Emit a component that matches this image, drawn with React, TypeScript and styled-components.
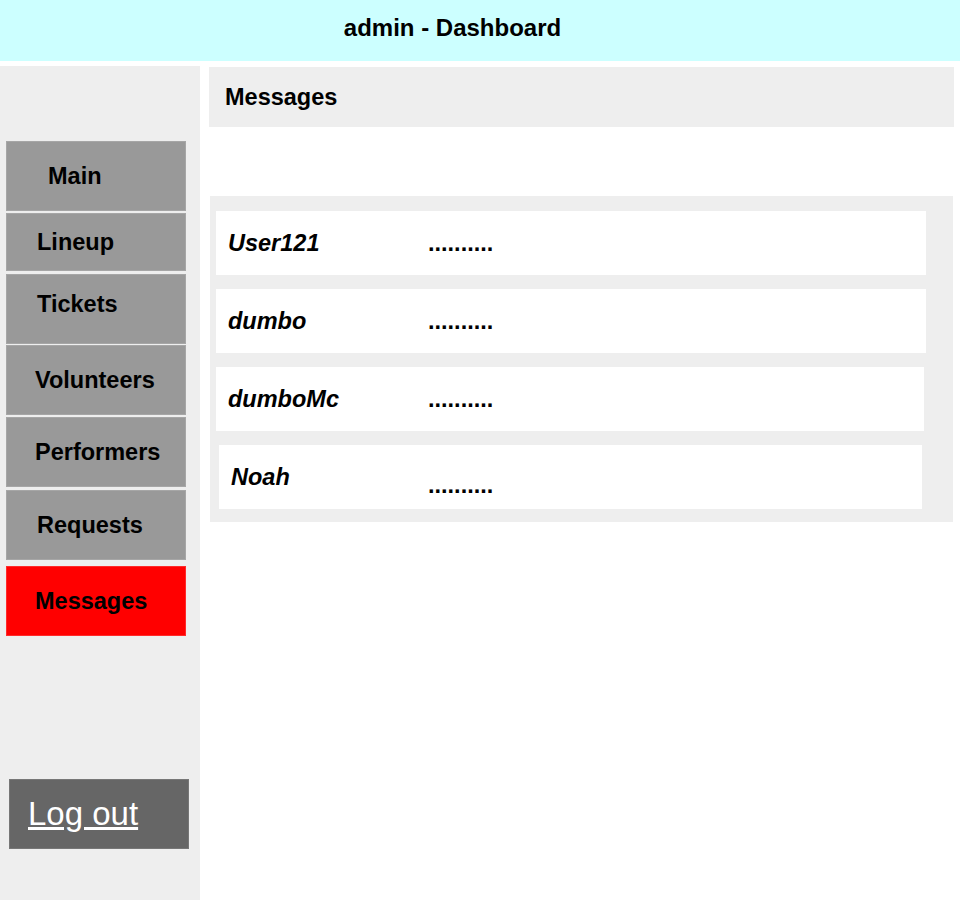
import React from 'react'
import styled, {createGlobalStyle} from 'styled-components'

interface NavEntry {
  label: string
  height: number
  gap: number
  indent: number
  lift?: number
  active?: boolean
}

interface MessageEntry {
  user: string
  left: number
  right: number
  drop?: number
}

const GlobalStyle = createGlobalStyle`
  html, body {
    margin: 0;
    padding: 0;
    background: #ffffff;
  }

  body {
    font-family: "Liberation Sans", Arial, sans-serif;
    color: #000000;
  }
`

const navEntries: NavEntry[] = [
  {label: 'Main', height: 70, gap: 0, indent: 42},
  {label: 'Lineup', height: 58, gap: 2, indent: 31},
  {label: 'Tickets', height: 70, gap: 3, indent: 31, lift: 10},
  {label: 'Volunteers', height: 70, gap: 1, indent: 29},
  {label: 'Performers', height: 70, gap: 2, indent: 29},
  {label: 'Requests', height: 70, gap: 3, indent: 31},
  {label: 'Messages', height: 70, gap: 6, indent: 29, active: true},
]

const messages: MessageEntry[] = [
  {user: 'User121', left: 0, right: 0},
  {user: 'dumbo', left: 0, right: 0},
  {user: 'dumboMc', left: 0, right: 2},
  {user: 'Noah', left: 3, right: 4, drop: 8},
]

const Page = styled.div`
  display: flex;
  flex-direction: column;
  min-height: 900px;
`

const TopBar = styled.header`
  height: 61px;
  box-sizing: border-box;
  background: #ccffff;
  display: flex;
  align-items: center;
  justify-content: center;
  padding: 0 55px 6px 0;
  font-size: 24px;
  font-weight: bold;
`

const Body = styled.div`
  flex: 1;
  display: flex;
  margin-top: 5px;
`

const Sidebar = styled.aside`
  width: 200px;
  flex-shrink: 0;
  background: #eeeeee;
  padding: 75px 0 0 6px;
  box-sizing: border-box;
  display: flex;
  flex-direction: column;
`

const NavList = styled.nav`
  display: flex;
  flex-direction: column;
  width: 180px;
`

const NavButton = styled.div<{
  $height: number
  $gap: number
  $indent: number
  $lift: number
  $active: boolean
}>`
  height: ${(p) => p.$height}px;
  margin-top: ${(p) => p.$gap}px;
  padding-left: ${(p) => p.$indent}px;
  padding-bottom: ${(p) => p.$lift}px;
  box-sizing: border-box;
  display: flex;
  align-items: center;
  background: ${(p) => (p.$active ? '#ff0000' : '#999999')};
  box-shadow: inset 0 0 0 1px ${(p) => (p.$active ? '#ff2a2a' : '#a6a6a6')};
  font-size: 23.5px;
  font-weight: bold;
  cursor: pointer;
`

const LogoutButton = styled.a`
  margin: 143px 0 0 3px;
  width: 180px;
  height: 70px;
  box-sizing: border-box;
  padding-left: 19px;
  display: flex;
  align-items: center;
  background: #666666;
  box-shadow: inset 0 0 0 1px #777777;
  color: #ffffff;
  font-size: 33px;
  text-decoration: underline;
  text-underline-offset: 2px;
  cursor: pointer;
`

const Content = styled.main`
  flex: 1;
  display: flex;
  flex-direction: column;
  padding: 1px 6px 0 9px;
`

const SectionTitle = styled.div`
  height: 60px;
  background: #eeeeee;
  display: flex;
  align-items: center;
  padding-left: 16px;
  font-size: 23.5px;
  font-weight: bold;
`

const MessagePanel = styled.section`
  margin: 69px 1px 0 1px;
  background: #eeeeee;
  padding: 15px 27px 13px 6px;
  display: flex;
  flex-direction: column;
  gap: 14px;
`

const MessageRow = styled.div<{$left: number; $right: number}>`
  height: 64px;
  margin: 0 ${(p) => p.$right}px 0 ${(p) => p.$left}px;
  background: #ffffff;
  display: flex;
  align-items: center;
  padding-left: 12px;
  font-size: 23.5px;
  font-weight: bold;
`

const UserName = styled.span<{$shift: number}>`
  width: ${(p) => 200 - p.$shift}px;
  font-style: italic;
`

const Preview = styled.span<{$drop: number}>`
  position: relative;
  top: ${(p) => p.$drop}px;
`

export default function App() {
  return (
    <>
      <GlobalStyle />
      <Page>
        <TopBar>admin - Dashboard</TopBar>
        <Body>
          <Sidebar>
            <NavList>
              {navEntries.map((entry) => (
                <NavButton
                  key={entry.label}
                  $height={entry.height}
                  $gap={entry.gap}
                  $indent={entry.indent}
                  $lift={entry.lift ?? 0}
                  $active={entry.active ?? false}
                >
                  {entry.label}
                </NavButton>
              ))}
            </NavList>
            <LogoutButton>Log out</LogoutButton>
          </Sidebar>
          <Content>
            <SectionTitle>Messages</SectionTitle>
            <MessagePanel>
              {messages.map((message) => (
                <MessageRow key={message.user} $left={message.left} $right={message.right}>
                  <UserName $shift={message.left}>{message.user}</UserName>
                  <Preview $drop={message.drop ?? 0}>..........</Preview>
                </MessageRow>
              ))}
            </MessagePanel>
          </Content>
        </Body>
      </Page>
    </>
  )
}
